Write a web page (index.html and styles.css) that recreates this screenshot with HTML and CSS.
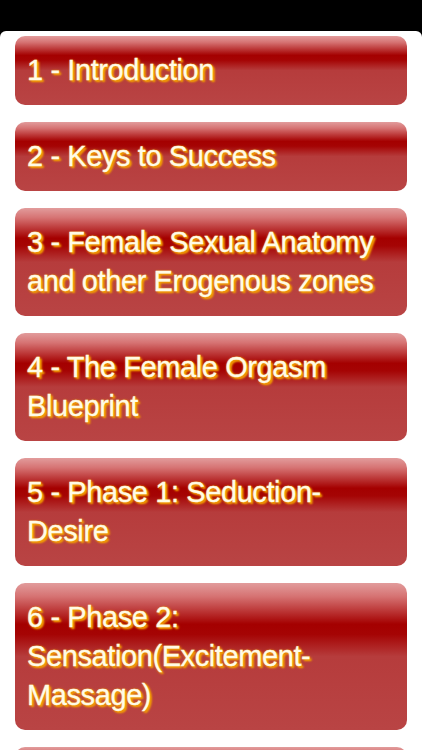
FILE: index.html
```html
<!DOCTYPE html>
<html lang="en">

<head>
  <meta charset="UTF-8" />
  <meta name="viewport" content="width=device-width, initial-scale=1.0" />
  <title>Chapters</title>
  <link rel="stylesheet" href="styles.css">
</head>

<body>
  <div class="topbar"></div>

  <div class="panel">
    <a class="chapter" href="#">1 - Introduction</a>
    <a class="chapter" href="#">2 - Keys to Success</a>
    <a class="chapter" href="#">3 - Female Sexual Anatomy and other Erogenous zones</a>
    <a class="chapter" href="#">4 - The Female Orgasm Blueprint</a>
    <a class="chapter" href="#">5 - Phase 1: Seduction-Desire</a>
    <a class="chapter" href="#">6 - Phase 2: Sensation(Excitement-Massage)</a>
    <a class="chapter more" href="#" aria-label="More chapters"></a>
  </div>
</body>

</html>
```

FILE: styles.css
```css
body {
  margin: 0;
  background: #000;
  font-family: 'Liberation Sans', Arial, sans-serif;
  height: 750px;
  overflow: hidden;
}

.topbar {
  height: 31px;
  background: #000;
}

.panel {
  background: #fff;
  border-radius: 6px 6px 0 0;
  padding: 5px 15px 20px;
  display: flex;
  flex-direction: column;
  gap: 17px;
}

.chapter {
  display: block;
  padding: 15px 12px;
  border-radius: 10px;
  background: linear-gradient(to bottom,
      #e29c9c 0%,
      #d67373 9%,
      #a40000 28%,
      #a50404 35%,
      #b63c3c 50%,
      #b94444 100%);
  color: #fffbe6;
  text-decoration: none;
  font-size: 29px;
  letter-spacing: -0.4px;
  line-height: 39px;
  -webkit-text-stroke: 0.3px #fffbe6;
  text-shadow: 2px 2px 2px #f5a000, 1px 1px 3px #f09000, 0 0 2px #e89000;
}

.chapter.more {
  min-height: 39px;
}
```
